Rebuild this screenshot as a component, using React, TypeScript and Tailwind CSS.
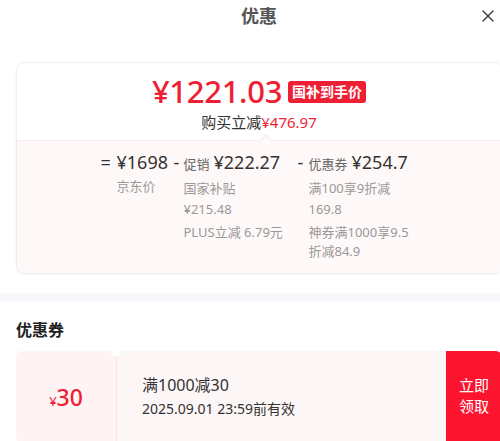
import { X } from 'lucide-react';

const font = { fontFamily: '"Noto Sans", "Noto Sans CJK SC", sans-serif' };

function Breakdown() {
  return (
    <div className="flex justify-center pl-[20px] pt-[9px] text-[13px] leading-[21px] text-[#999]">
      <div className="w-[73px]">
        <div className="flex items-baseline text-[18px] leading-[24px] text-[#333]">
          <span className="w-[16px]">=</span>
          <span>¥1698</span>
        </div>
        <div className="mt-[2px] pl-[16px]">京东价</div>
      </div>
      <div className="w-[124px]">
        <div className="flex items-baseline text-[18px] leading-[24px] text-[#333]">
          <span className="w-[10px]">-</span>
          <span className="text-[13px] text-[#666]">促销</span>
          <span className="ml-[4px]">¥222.27</span>
        </div>
        <div className="mt-[2px] pl-[10px]">
          <div>国家补贴</div>
          <div>¥215.48</div>
          <div className="mt-[2px]">PLUS立减 6.79元</div>
        </div>
      </div>
      <div className="w-[140px]">
        <div className="flex items-baseline text-[18px] leading-[24px] text-[#333]">
          <span className="w-[11px]">-</span>
          <span className="text-[13px] text-[#666]">优惠券</span>
          <span className="ml-[4px]">¥254.7</span>
        </div>
        <div className="mt-[2px] pl-[11px]">
          <div>满100享9折减</div>
          <div>169.8</div>
          <div className="mt-[2px]">神券满1000享9.5</div>
          <div className="-mt-[2px]">折减84.9</div>
        </div>
      </div>
    </div>
  );
}

export default function App() {
  return (
    <div className="w-[500px] h-[441px] overflow-hidden bg-white" style={font}>
      <div className="w-[518px]">
        <div className="relative h-[32px] flex items-center justify-center pt-[1px]">
          <span className="text-[18px] font-bold text-[#555]">优惠</span>
          <X className="absolute right-[20px] top-[6px] text-[#333]" size={20} strokeWidth={1.6} />
        </div>
        <div className="mx-[16px] mt-[30px] rounded-[8px] border border-[#f1eded] shadow-[0_1px_3px_rgba(0,0,0,0.04)] overflow-hidden">
          <div className="relative h-[77px] bg-white flex flex-col items-center pt-[11px]">
            <div className="flex items-center h-[34px]">
              <span className="text-[31px] leading-[34px] font-medium text-[#ee1f35] tracking-[-0.3px]">¥1221.03</span>
              <span className="ml-[6px] mt-[2px] rounded-[3px] bg-[#ee1f35] px-[4px] text-[14px] leading-[22px] font-bold text-white">国补到手价</span>
            </div>
            <div className="mt-[4px] text-[15px] leading-[20px] text-[#333]">
              购买立减<span className="text-[#ee1f35]">¥476.97</span>
            </div>
            <div className="absolute bottom-[-4px] left-[245px] w-[8px] h-[8px] rotate-45 bg-[#fff8f8] border-l border-t border-[#f5eaea]" />
          </div>
          <div className="h-[133px] bg-[#fff8f8] border-t border-[#f8eeee]">
            <Breakdown />
          </div>
        </div>
        <div className="mt-[19px] h-[8px] bg-[#f6f7fb]" />
        <div className="px-[16px] pt-[17px]">
          <div className="text-[16px] leading-[24px] font-bold text-[#222]">优惠券</div>
          <div className="mt-[9px] flex h-[92px] rounded-[6px] overflow-hidden">
            <div className="relative w-[100px] bg-[#fff3f4] flex items-center justify-center">
              <span className="text-[#ee1f35] flex items-baseline">
                <span className="text-[13px]">¥</span>
                <span className="text-[23px] font-medium">30</span>
              </span>
              <div className="absolute -right-[5px] -top-[5px] w-[10px] h-[10px] rounded-full bg-white z-10" />
            </div>
            <div className="flex-1 bg-[#fdf6f6] border-l border-[#f6e8e8] pl-[25px] pt-[22px]">
              <div className="text-[16px] leading-[24px] text-[#333]">满1000减30</div>
              <div className="mt-[2px] text-[14px] leading-[20px] text-[#333]">2025.09.01 23:59前有效</div>
            </div>
            <div className="w-[56px] bg-[#fd1530] flex items-start justify-center pt-[24px]">
              <div className="text-[15px] leading-[21px] text-white text-center w-[32px]">立即领取</div>
            </div>
          </div>
        </div>
      </div>
    </div>
  );
}
